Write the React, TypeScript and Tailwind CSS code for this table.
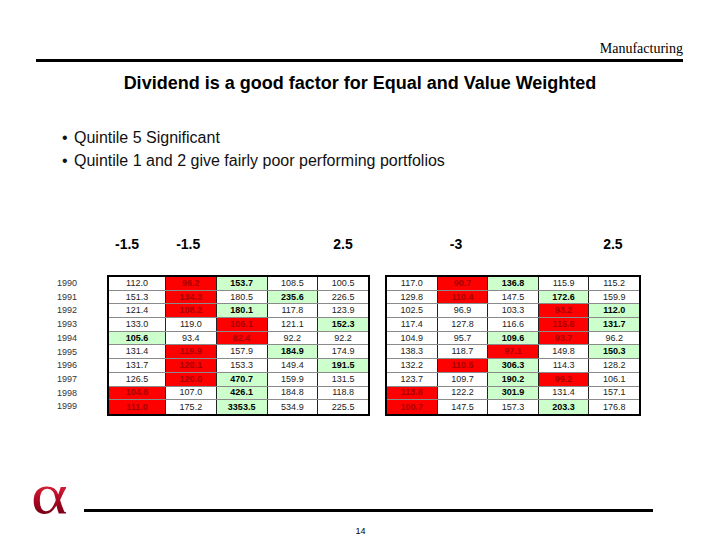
import React from 'react';

type Mark = '' | 'R' | 'G';
type Cell = [string, Mark];

const years = ['1990', '1991', '1992', '1993', '1994', '1995', '1996', '1997', '1998', '1999'];

// equal weighted
const left: Cell[][] = [
  [['112.0', ''], ['96.2', 'R'], ['153.7', 'G'], ['108.5', ''], ['100.5', '']],
  [['151.3', ''], ['134.3', 'R'], ['180.5', ''], ['235.6', 'G'], ['226.5', '']],
  [['121.4', ''], ['108.2', 'R'], ['180.1', 'G'], ['117.8', ''], ['123.9', '']],
  [['133.0', ''], ['119.0', ''], ['106.1', 'R'], ['121.1', ''], ['152.3', 'G']],
  [['105.6', 'G'], ['93.4', ''], ['82.4', 'R'], ['92.2', ''], ['92.2', '']],
  [['131.4', ''], ['119.9', 'R'], ['157.9', ''], ['184.9', 'G'], ['174.9', '']],
  [['131.7', ''], ['128.1', 'R'], ['153.3', ''], ['149.4', ''], ['191.5', 'G']],
  [['126.5', ''], ['120.0', 'R'], ['470.7', 'G'], ['159.9', ''], ['131.5', '']],
  [['104.8', 'R'], ['107.0', ''], ['426.1', 'G'], ['184.8', ''], ['118.8', '']],
  [['111.0', 'R'], ['175.2', ''], ['3353.5', 'G'], ['534.9', ''], ['225.5', '']],
];

// value weighted
const right: Cell[][] = [
  [['117.0', ''], ['90.7', 'R'], ['136.8', 'G'], ['115.9', ''], ['115.2', '']],
  [['129.8', ''], ['110.4', 'R'], ['147.5', ''], ['172.6', 'G'], ['159.9', '']],
  [['102.5', ''], ['96.9', ''], ['103.3', ''], ['93.2', 'R'], ['112.0', 'G']],
  [['117.4', ''], ['127.8', ''], ['116.6', ''], ['115.8', 'R'], ['131.7', 'G']],
  [['104.9', ''], ['95.7', ''], ['109.6', 'G'], ['93.7', 'R'], ['96.2', '']],
  [['138.3', ''], ['118.7', ''], ['97.1', 'R'], ['149.8', ''], ['150.3', 'G']],
  [['132.2', ''], ['110.5', 'R'], ['306.3', 'G'], ['114.3', ''], ['128.2', '']],
  [['123.7', ''], ['109.7', ''], ['190.2', 'G'], ['99.2', 'R'], ['106.1', '']],
  [['113.8', 'R'], ['122.2', ''], ['301.9', 'G'], ['131.4', ''], ['157.1', '']],
  [['100.7', 'R'], ['147.5', ''], ['157.3', ''], ['203.3', 'G'], ['176.8', '']],
];

const cellTone = (m: Mark) =>
  m === 'R'
    ? 'bg-[#ff0000] text-[#a80000] font-bold'
    : m === 'G'
    ? 'bg-[#ccffcc] text-black font-bold'
    : 'bg-white text-[#222]';

const Grid: React.FC<{ rows: Cell[][]; firstWide?: boolean; className?: string }> = ({ rows, firstWide, className }) => (
  <div className={`border-2 border-black flex flex-col ${className ?? ''}`}>
    {rows.map((row, i) => (
      <div key={i} className={`flex h-[13.7px] ${i < rows.length - 1 ? 'border-b border-[#8a8a8a]' : ''}`}>
        {row.map(([v, m], j) => (
          <div
            key={j}
            className={`flex items-center justify-center text-[9px] leading-none ${cellTone(m)} ${
              j === 0 ? (firstWide ? 'w-[56px] shrink-0' : 'flex-1') : 'flex-1 border-l border-[#222]'
            }`}
          >
            {v}
          </div>
        ))}
      </div>
    ))}
  </div>
);

const App: React.FC = () => {
  return (
    <div className="w-[720px] h-[540px] bg-white flex flex-col overflow-hidden font-['Liberation_Sans',Arial,sans-serif] text-black">
      {/* Header */}
      <div className="pt-[41px] pr-[37px] text-right text-[14px] leading-[16px] font-['Liberation_Serif','Times_New_Roman',serif]">
        Manufacturing
      </div>
      <div className="mt-[2px] ml-[36px] w-[647px] h-[3px] bg-black" />

      <h1 className="mt-[11px] text-center text-[18px] leading-[20px] font-bold">
        Dividend is a good factor for Equal and Value Weighted
      </h1>

      {/* Bullets */}
      <ul className="mt-[33px] ml-[62px] text-[16px] leading-[23px] text-[#111]">
        <li className="flex">
          <span className="w-[12px]">•</span>Quintile 5 Significant
        </li>
        <li className="flex">
          <span className="w-[12px]">•</span>Quintile 1 and 2 give fairly poor performing portfolios
        </li>
      </ul>

      {/* t-stats */}
      <div className="mt-[64px] flex text-[14px] leading-[16px] font-bold">
        <span className="ml-[115px]">-1.5</span>
        <span className="ml-[37px]">-1.5</span>
        <span className="ml-[133px]">2.5</span>
        <span className="ml-[97px]">-3</span>
        <span className="ml-[141px]">2.5</span>
      </div>

      {/* Tables */}
      <div className="mt-[23px] flex">
        <div className="ml-[57px] w-[50px] pt-[2px] flex flex-col text-[9px] text-[#333]">
          {years.map((y) => (
            <div key={y} className="h-[13.7px] flex items-center">
              {y}
            </div>
          ))}
        </div>
        <Grid rows={left} firstWide className="w-[263px]" />
        <Grid rows={right} className="ml-[15px] w-[256px]" />
      </div>

      {/* Footer */}
      <div className="mt-[58px] flex items-end">
        <span className="ml-[31px] w-[32px] inline-block origin-left scale-x-125 text-[56px] leading-[40px] font-['Liberation_Serif',serif] bg-gradient-to-b from-[#e8344c] via-[#c0102a] to-[#7a0014] bg-clip-text text-transparent">
          α
        </span>
        <div className="ml-[21px] mb-[2px] w-[569px] h-[3px] bg-black" />
      </div>
      <div className="mt-[12px] text-center text-[9px] leading-[10px] pl-[1px] text-black">14</div>
    </div>
  );
};

export default App;
